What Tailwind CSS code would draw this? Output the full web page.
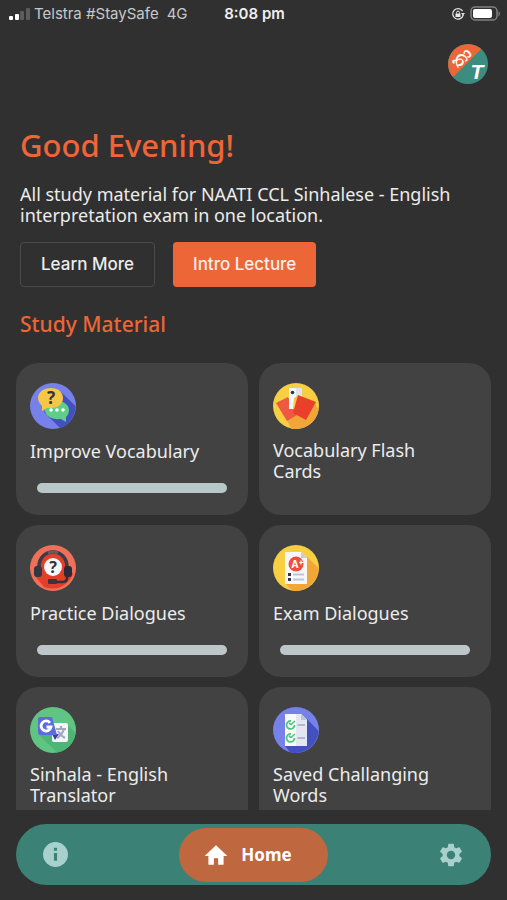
<!DOCTYPE html>
<html lang="en">
<head>
    <meta charset="UTF-8">
    <meta name="viewport" content="width=device-width, initial-scale=1.0">
    <title>NAATI CCL Sinhalese</title>
    <script src="https://cdn.jsdelivr.net/npm/@tailwindcss/browser@4"></script>
</head>
<body class="bg-[#303030] text-[#ececec] font-['Noto_Sans',sans-serif] h-screen flex flex-col overflow-hidden">
    <!-- Status bar -->
    <div class="grid grid-cols-[1fr_auto_1fr] items-center h-7 pl-2 pr-1.5 shrink-0 font-['Inter',sans-serif] text-[15px] text-[#c8c8c8]">
        <div class="flex items-center">
            <svg class="w-[22px] h-[14px] mr-1" viewBox="0 0 22 14" aria-hidden="true">
                <rect x="1" y="9" width="4" height="4" rx="1" fill="#fff"/>
                <rect x="7" y="7" width="4" height="6" rx="1" fill="#fff"/>
                <rect x="12" y="4" width="4" height="9" rx="1" fill="#5c5c5c"/>
                <rect x="18" y="1" width="4" height="12" rx="1" fill="#5c5c5c"/>
            </svg>
            <span>Telstra #StaySafe</span>
            <span class="ml-2">4G</span>
        </div>
        <span class="font-semibold text-[#efefef]">8:08 pm</span>
        <div class="flex items-center justify-end gap-1">
            <svg class="w-[14px] h-[14px]" viewBox="0 0 14 14" fill="none" aria-hidden="true">
                <path d="M11.6 4.2A5.3 5.3 0 1 0 12.2 8" stroke="#dcdcdc" stroke-width="1.3"/>
                <path d="M10 6h4l-2 3z" fill="#dcdcdc"/>
                <rect x="4.500" y="6.500" width="5" height="3.500" fill="#e8e8e8"/>
                <path d="M5.500 6.500V5.600a1.500 1.500 0 0 1 3 0v.9" stroke="#e8e8e8"/>
            </svg>
            <svg class="w-[32px] h-[16px]" viewBox="0 0 32 16" fill="none" aria-hidden="true">
                <rect x="2" y="1" width="26" height="13" rx="4" stroke="#808080" stroke-width="1.500"/>
                <rect x="4" y="3" width="19" height="9" rx="2" fill="#fff"/>
                <path d="M29.500 5.200c2 1 2 4 0 5z" fill="#808080"/>
            </svg>
        </div>
    </div>

    <main class="flex-1 min-h-0 overflow-hidden px-4 pt-4">
        <!-- Logo -->
        <div class="flex justify-end pr-[3px]">
            <svg class="w-10 h-10 overflow-visible" viewBox="0 0 40 40" role="img" aria-label="Logo">
                <circle cx="20" cy="20" r="20" fill="#3c8c80"/>
                <path d="M33.200 5A20 20 0 0 0 5 33.200z" fill="#ed6639"/>
                <text x="18" y="18" font-size="18" fill="#fff" stroke="#fff" stroke-width=".5" text-anchor="middle" transform="rotate(-44 18 18)">තා</text>
                <text x="29" y="35" font-size="21" font-weight="700" font-style="italic" font-family="Liberation Sans, sans-serif" fill="#fff" text-anchor="middle">T</text>
            </svg>
        </div>

        <!-- Intro -->
        <section class="px-1">
            <h1 class="mt-[39px] text-[31px] leading-[44px] font-medium text-[#ec6638]">Good Evening!</h1>
            <p class="mt-[17px] text-lg leading-[21px]">All study material for NAATI CCL Sinhalese - English interpretation exam in one location.</p>
            <div class="flex gap-[18px] mt-4 font-['Inter',sans-serif] text-[17px] font-medium">
                <button class="h-[45px] px-5 rounded-sm border border-[#4b4b4b]">Learn More</button>
                <button class="h-[45px] px-5 rounded-sm bg-[#ed6637] text-[#fbeee9]">Intro Lecture</button>
            </div>
            <h2 class="mt-6 text-[21px] leading-[26px] font-medium text-[#ec6638]">Study Material</h2>
        </section>

        <!-- Cards -->
        <div class="grid grid-cols-2 auto-rows-[152px] gap-x-[11px] gap-y-[10px] mt-[26px] text-lg leading-[21px]">
            <a href="#" class="block bg-[#424242] rounded-[22px] px-[14px] pt-5">
                <svg class="w-[46px] h-[46px]" viewBox="0 0 46 46" aria-hidden="true">
                    <circle cx="23" cy="23" r="23" fill="#7681e9"/>
                    <path d="M31 9l14.500 14A23 23 0 0 1 30 45L14 29z" fill="#4350bf"/>
                    <path d="M27 18c7 0 12 4 12 9 0 3-1 5-3 7v5l-5-3c-9 1-16-3-16-9s5-9 12-9z" fill="#5dcf86"/>
                    <path d="M21 5c7 0 12 4 12 10s-5 10-12 10h-4l-5 3v-5c-2-2-4-5-4-8 0-6 6-10 13-10z" fill="#f6c646"/>
                    <text x="21" y="21" font-size="17" font-weight="700" fill="#30343c" text-anchor="middle">?</text>
                    <circle cx="21" cy="27" r="1.800" fill="#fff"/><circle cx="27" cy="27" r="1.800" fill="#fff"/><circle cx="33" cy="27" r="1.800" fill="#fff"/>
                </svg>
                <h3 class="mt-3">Improve Vocabulary</h3>
                <div class="h-[10px] mt-[21px] mx-[7px] rounded-full bg-[#b8c8c8]" role="progressbar" aria-label="Improve Vocabulary"></div>
            </a>

            <a href="#" class="block bg-[#424242] rounded-[22px] px-[14px] pt-5">
                <svg class="w-[46px] h-[46px]" viewBox="0 0 46 46" aria-hidden="true">
                    <circle cx="23" cy="23" r="23" fill="#f8ce43"/>
                    <path d="M42 20l3.500 7A23 23 0 0 1 18 45.400L14 37z" fill="#f3a638"/>
                    <path d="M3 20l12-6 9 18-10 6z" fill="#ef5843"/>
                    <path d="M16 5h13v11l-8 10h-5z" fill="#f6f7fa"/>
                    <path d="M23 5h6v9h-6z" fill="#dfe3ee"/>
                    <path d="M21 15l5-3-4 14h-2z" fill="#f6c646"/>
                    <circle cx="19.500" cy="9.500" r="1.800" fill="#2c3548"/>
                    <path d="M25 12l18 7-10 18-13-7z" fill="#e8402b"/>
                </svg>
                <h3 class="mt-[11px] mr-8">Vocabulary Flash Cards</h3>
            </a>

            <a href="#" class="block bg-[#424242] rounded-[22px] px-[14px] pt-5">
                <svg class="w-[46px] h-[46px]" viewBox="0 0 46 46" fill="none" aria-hidden="true">
                    <circle cx="23" cy="23" r="23" fill="#ef7059"/>
                    <path d="M8 16Q12 6 23 7q11 0 15 12l5 10A22 22 0 0 1 14 42L5 31z" fill="#e23e29"/>
                    <path d="M9 22C9 2 37 2 37 22" stroke="#3a3d49" stroke-width="3.500"/>
                    <path d="M18 8q5-2 10 0" stroke="#5a5e69" stroke-width="3"/>
                    <path d="M37 30v3q0 4-5 4H22" stroke="#30333e" stroke-width="2.500"/>
                    <rect x="4" y="21" width="8" height="11" rx="3" fill="#343743"/>
                    <rect x="34" y="21" width="8" height="11" rx="3" fill="#292c36"/>
                    <rect x="18" y="34" width="9" height="5" rx="1" fill="#343743"/>
                    <circle cx="23" cy="22" r="9" fill="#f7f7f9"/>
                    <text x="23" y="28" font-size="16" font-weight="700" fill="#30343c" text-anchor="middle">?</text>
                </svg>
                <h3 class="mt-3">Practice Dialogues</h3>
                <div class="h-[10px] mt-[21px] mx-[7px] rounded-full bg-[#bdc7ca]" role="progressbar" aria-label="Practice Dialogues"></div>
            </a>

            <a href="#" class="block bg-[#424242] rounded-[22px] px-[14px] pt-5">
                <svg class="w-[46px] h-[46px]" viewBox="0 0 46 46" fill="none" aria-hidden="true">
                    <circle cx="23" cy="23" r="23" fill="#f8ce43"/>
                    <path d="M34 12l11.500 11A23 23 0 0 1 19 45.600L12 38z" fill="#f3a638"/>
                    <path d="M12 7h16l6 6v26H12z" fill="#f6f6fb"/>
                    <path d="M28 7l6 6h-6z" fill="#c5cbdc"/>
                    <circle cx="23" cy="19" r="7.500" fill="#ee4f3c"/>
                    <text x="22" y="23" font-size="10" font-weight="700" fill="#fff" text-anchor="middle">A</text>
                    <path d="M26 17.500h4M28 15.500v4" stroke="#fff" stroke-width="1.200"/>
                    <path d="M15 29.500h3M15 34.500h3" stroke="#343743" stroke-width="3"/>
                    <path d="M20 29.500h11M20 34.500h11" stroke="#bcc3dd" stroke-width="2"/>
                </svg>
                <h3 class="mt-3">Exam Dialogues</h3>
                <div class="h-[10px] mt-[21px] mx-[7px] rounded-full bg-[#bdc7ca]" role="progressbar" aria-label="Exam Dialogues"></div>
            </a>

            <a href="#" class="block bg-[#424242] rounded-[22px] px-[14px] pt-5">
                <svg class="w-[46px] h-[46px]" viewBox="0 0 46 46" fill="none" aria-hidden="true">
                    <circle cx="23" cy="23" r="23" fill="#60c583"/>
                    <path d="M37 17l8.500 9A23 23 0 0 1 27 45.600L9 28l14-10z" fill="#4fb574"/>
                    <rect x="22" y="16" width="16" height="19" rx="2" fill="#f4f5f9"/>
                    <path d="M22 27h7l-4 6z" fill="#3740a5"/>
                    <path d="M10 10h12l5 18H10q-2 0-2-2V12q0-2 2-2z" fill="#5f6bdc"/>
                    <path d="M20 15.800a5 5 0 1 0 1 4.200h-4.500" stroke="#fff" stroke-width="2.800"/>
                    <path d="M26 22h10M31 19v3M34 22q-2 6-7 9M28 24q3 5 7 7" stroke="#a3a8bd" stroke-width="2.200"/>
                </svg>
                <h3 class="mt-[11px] mr-8">Sinhala - English Translator</h3>
            </a>

            <a href="#" class="block bg-[#424242] rounded-[22px] px-[14px] pt-5">
                <svg class="w-[46px] h-[46px]" viewBox="0 0 46 46" fill="none" aria-hidden="true">
                    <circle cx="23" cy="23" r="23" fill="#7681e9"/>
                    <path d="M34 12l11.500 12A23 23 0 0 1 17 45.200L12 39z" fill="#4350bf"/>
                    <path d="M12 7h16l6 6v26H12z" fill="#f9f9fc"/>
                    <path d="M23 7h5l6 6v26H23z" fill="#e4e6f1"/>
                    <path d="M28 7l6 6h-6z" fill="#bec4d8"/>
                    <path d="M18 14a4 4 0 1 0 3.500 4M18 27a4 4 0 1 0 3.500 4" stroke="#4fc67b" stroke-width="1.800"/>
                    <path d="M16 16l2 1.500 4-3.500M16 29l2 1.500 4-3.500" stroke="#4fc67b" stroke-width="1.600"/>
                    <path d="M24.500 18H32M24.500 31H32" stroke="#b4b9c9" stroke-width="2"/>
                </svg>
                <h3 class="mt-[11px] mr-8">Saved Challanging Words</h3>
            </a>
        </div>
    </main>

    <!-- Bottom navigation -->
    <nav class="grid grid-cols-[1fr_auto_1fr] items-center h-[61px] mx-4 mt-[14px] mb-[15px] px-[26px] rounded-full bg-[#3b8175] shrink-0">
        <a href="#" aria-label="Info">
            <svg class="w-[27px] h-[27px]" viewBox="0 0 26 26" aria-hidden="true">
                <circle cx="13" cy="13" r="12" fill="#a8d0cc"/>
                <path d="M11.500 11.500h3V19h-3zM11.500 6.500h3v3h-3z" fill="#3b8175"/>
            </svg>
        </a>
        <a href="#" class="flex items-center gap-3 h-[54px] pl-6 pr-9 rounded-full bg-[#bf673f] text-[17px] font-bold text-white">
            <svg class="w-[26px] h-[26px]" viewBox="0 0 24 24" fill="currentColor" aria-hidden="true">
                <path d="M10 21v-6h4v6h5v-8h3.500L12 3 1.500 13H5v8z"/>
            </svg>
            Home
        </a>
        <a href="#" class="justify-self-end" aria-label="Settings">
            <svg class="w-[28px] h-[28px]" viewBox="0 0 24 24" fill="#a8d0cc" aria-hidden="true">
                <path d="M19.140 12.940c.04-.3.060-.61.060-.94 0-.32-.02-.64-.07-.94l2.030-1.580c.18-.14.230-.41.120-.61l-1.920-3.320c-.12-.22-.37-.29-.59-.22l-2.390.96c-.5-.38-1.030-.7-1.620-.94l-.36-2.540c-.04-.24-.24-.41-.48-.41h-3.840c-.24 0-.43.170-.47.410l-.36 2.540c-.59.240-1.130.570-1.620.940l-2.390-.96c-.22-.08-.47 0-.59.220L2.740 8.870c-.12.210-.08.470.12.610l2.030 1.580c-.05.300-.09.630-.09.940s.02.640.07.940l-2.030 1.580c-.18.140-.23.410-.12.610l1.920 3.320c.12.220.37.290.59.220l2.390-.96c.5.380 1.030.7 1.620.94l.36 2.540c.05.240.24.410.48.410h3.840c.24 0 .44-.17.470-.41l.36-2.540c.59-.24 1.130-.56 1.620-.94l2.390.96c.22.080.47 0 .59-.22l1.920-3.320c.12-.22.070-.47-.12-.61zM12 15.600A3.600 3.600 0 1 1 12 8.400a3.600 3.600 0 0 1 0 7.200z"/>
            </svg>
        </a>
    </nav>
</body>
</html>
